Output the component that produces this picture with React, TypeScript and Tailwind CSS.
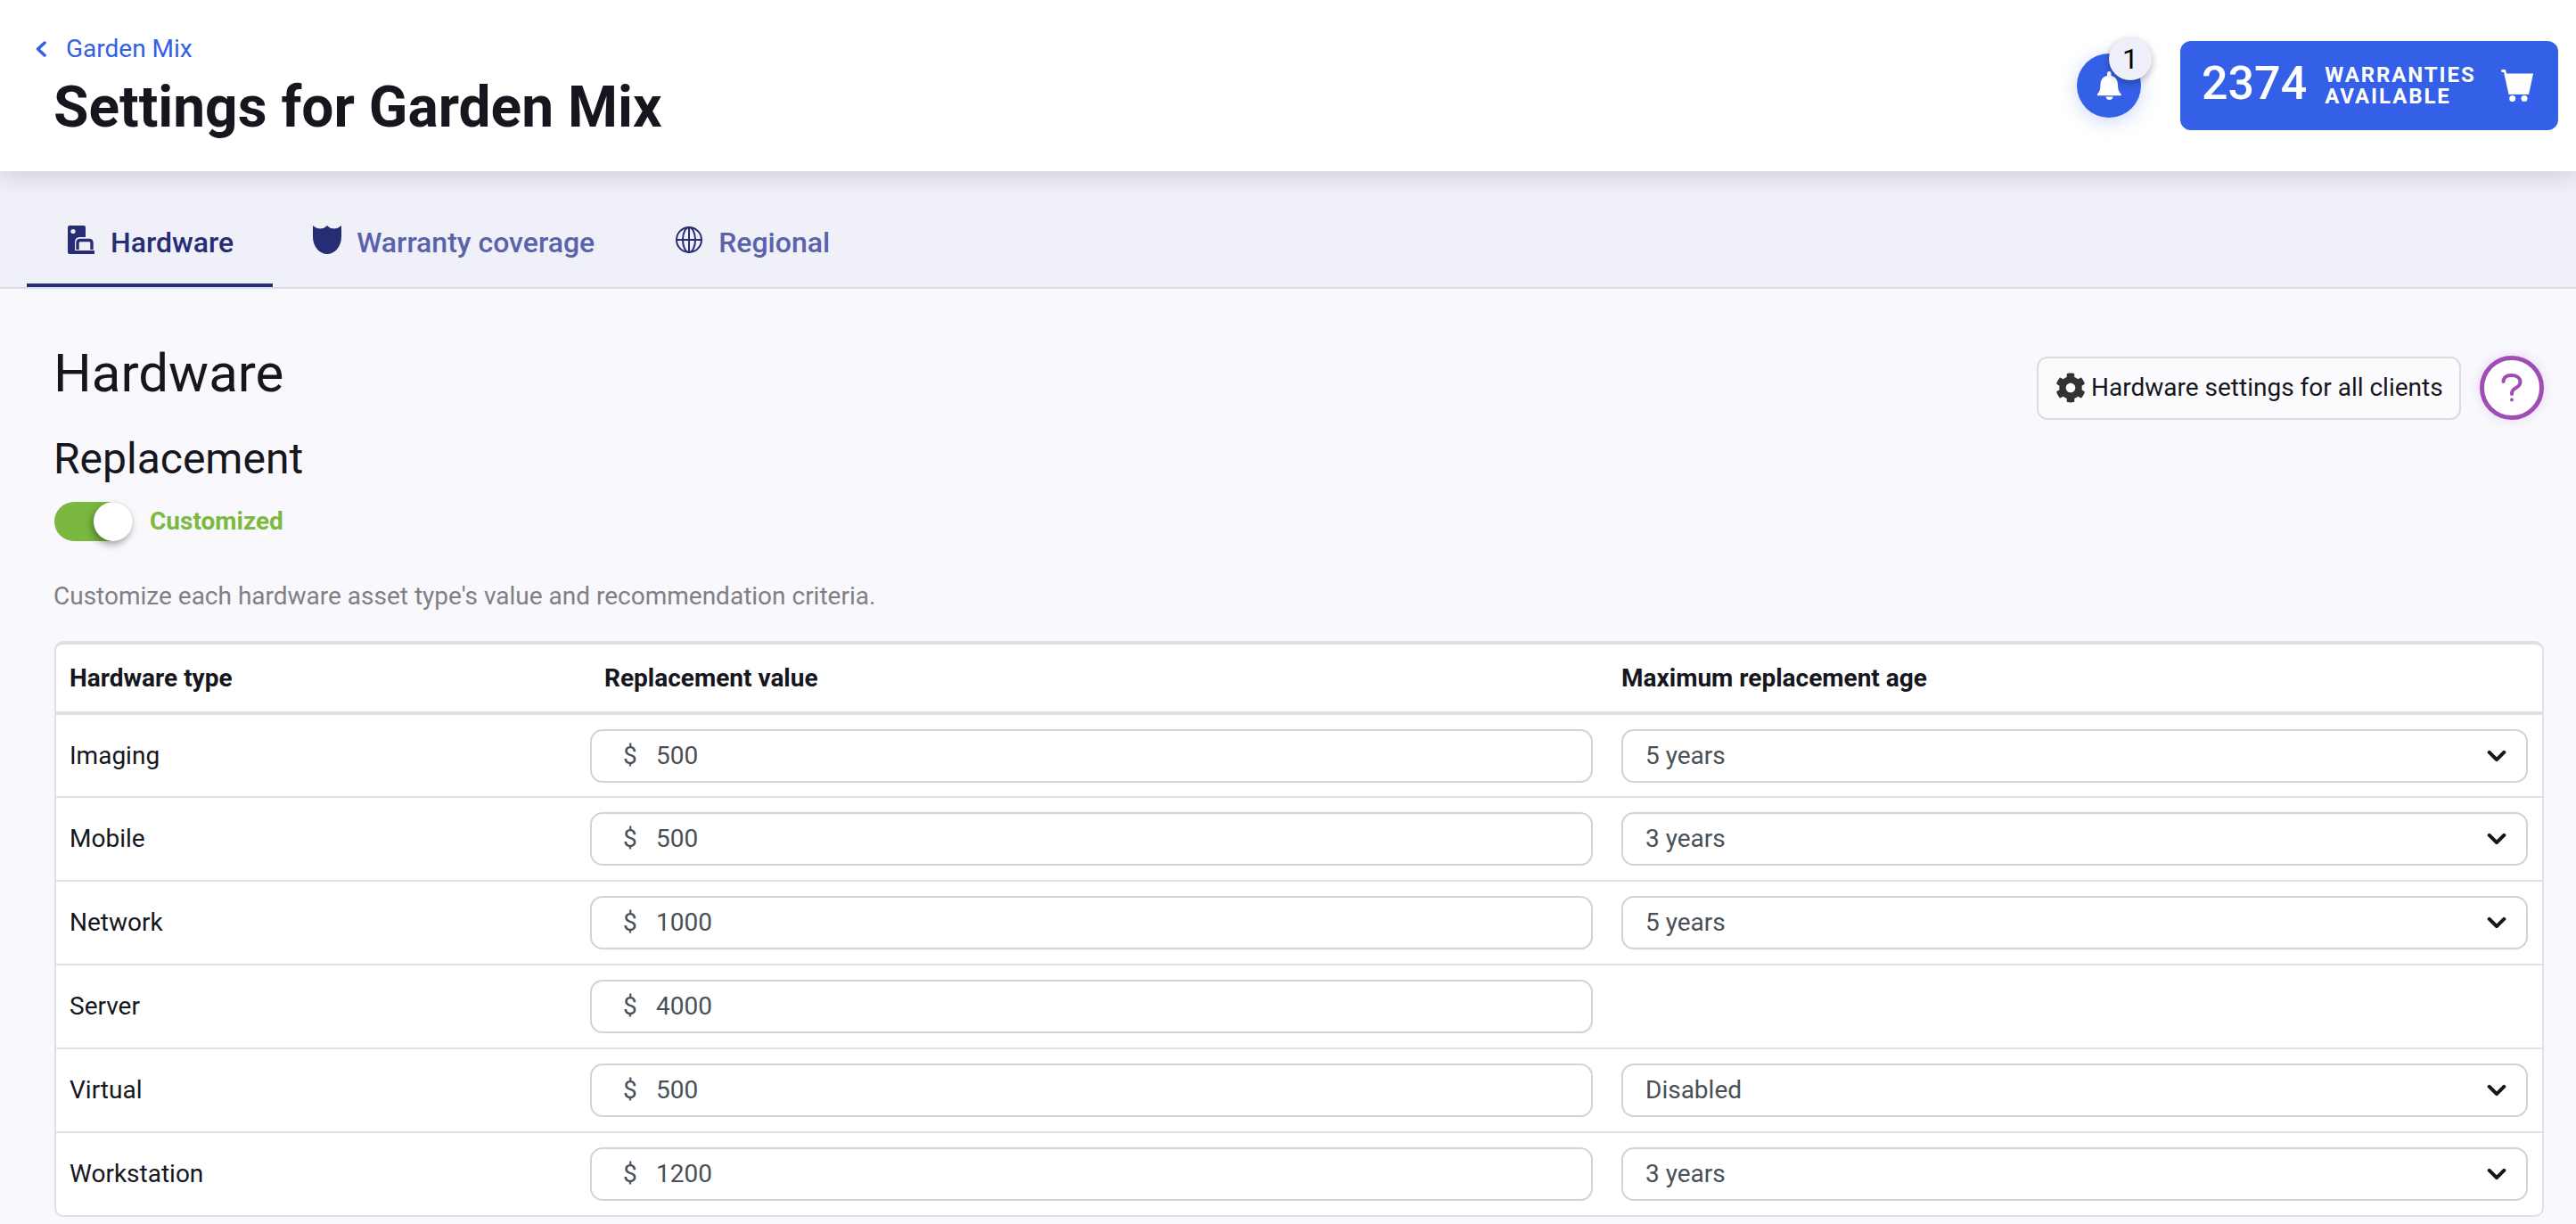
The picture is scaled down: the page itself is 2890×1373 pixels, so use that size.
import { FaCog } from 'react-icons/fa';

const ROWS = [
  { name: 'Imaging', value: '500', age: '5 years' },
  { name: 'Mobile', value: '500', age: '3 years' },
  { name: 'Network', value: '1000', age: '5 years' },
  { name: 'Server', value: '4000', age: '' },
  { name: 'Virtual', value: '500', age: 'Disabled' },
  { name: 'Workstation', value: '1200', age: '3 years' },
];

function HardwareIcon() {
  return (
    <svg width="30" height="32" viewBox="0 0 30 32">
      <rect x="0" y="0" width="20" height="32" rx="2" fill="#272d75" />
      <circle cx="6" cy="6.5" r="2.6" fill="#f0f0f9" />
      <path d="M8 32V19c0-4 2-6 6-6h16v19z" fill="#f0f0f9" />
      <path d="M11 27V19.5c0-2 1-3 3-3h10c2 0 3 1 3 3V27" fill="none" stroke="#272d75" strokeWidth="3.4" />
      <rect x="8" y="28" width="22" height="4" fill="#272d75" />
    </svg>
  );
}

function ShieldIcon() {
  return (
    <svg width="32" height="32" viewBox="0 0 32 32">
      <path d="M0 0Q4 3.5 8 3.5 13 3.5 16 0 19 3.5 24 3.5 28 3.5 32 0V13C32 24 24 32 16 32 8 32 0 24 0 13Z" fill="#272d75" />
    </svg>
  );
}

function GlobeIcon() {
  return (
    <svg width="30" height="30" viewBox="0 0 30 30" fill="none" stroke="#272d75" strokeWidth="2">
      <circle cx="15" cy="15" r="14" />
      <ellipse cx="15" cy="15" rx="7" ry="14" />
      <path d="M15 1v28M1 15h28" />
    </svg>
  );
}

function BellIcon() {
  return (
    <svg width="27" height="32" viewBox="0 0 27 32" fill="#fff">
      <path d="M13.5 0c1.2 0 2 .9 2 2v3c5 1 7.5 5 7.5 10 0 5 1 8 3.5 10.5.6.6.3 1.8-.7 1.8H.7c-1 0-1.3-1.2-.7-1.8C2.5 23 3.500 20 3.500 15c0-5 2.500-9 7.500-10V2c0-1.100.8-2 2.500-2z" />
      <path d="M9.500 28.500h8c0 2-1.800 3.500-4 3.500s-4-1.500-4-3.500z" />
    </svg>
  );
}

function CartIcon() {
  return (
    <svg width="36" height="36" viewBox="0 0 36 36" fill="#fff">
      <path d="M1.500 0H3.500C4.500 0 5 .5 5.300 1.500L6 4.500H36L31 28H8.500L3 3H1.500C.5 3 0 2 0 1.500S.5 0 1.500 0z" />
      <circle cx="12.700" cy="32.500" r="3.500" />
      <circle cx="26" cy="32.500" r="3.500" />
    </svg>
  );
}

function QuestionIcon() {
  return (
    <svg width="24" height="32" viewBox="0 0 24 32" fill="none" stroke="#a04cb5" strokeWidth="4" strokeLinecap="round">
      <path d="M2.500 9C2.500 4.500 6 2 11.500 2 17.500 2 21.500 5 21.500 9.500 21.500 14 17.500 15.500 14.500 17.500 12.500 19 12 20.500 12 23" />
      <circle cx="12" cy="29.500" r="2" fill="#a04cb5" stroke="none" />
    </svg>
  );
}

export default function App() {
  return (
    <div className="h-[1373px] overflow-hidden bg-[#f8f8fd] text-[28px] text-[#15161e] [font-family:Roboto,sans-serif]">
      {/* Header */}
      <header className="relative z-10 flex h-[192px] items-center justify-between bg-white pr-[20px] shadow-[0_6px_24px_rgba(40,40,80,0.16)]">
        <div className="self-start pt-[37px]">
          <a className="flex items-center pl-[39px] leading-[36px] text-[#3361e5]">
            <svg width="14" height="18" viewBox="0 0 14 18" fill="none" stroke="#3361e5" strokeWidth="3.500" strokeLinecap="round" strokeLinejoin="round" className="mr-[21px]">
              <path d="M11 2L3.500 9 11 16" />
            </svg>
            Garden Mix
          </a>
          <h1 className="mt-[12px] pl-[60px] text-[64px] font-bold leading-[72px]">Settings for Garden Mix</h1>
        </div>
        <div className="flex items-center gap-[44px]">
          <div className="relative flex h-[72px] w-[72px] items-center justify-center rounded-full bg-[#3360e6] shadow-[0_4px_20px_rgba(51,96,230,0.25)]">
            <BellIcon />
            <span className="absolute left-[36px] top-[-18px] flex h-[48px] w-[48px] items-center justify-center rounded-full bg-[#eeeff8] text-[32px] text-black shadow-[0_3px_8px_rgba(0,0,0,0.3)]">
              1
            </span>
          </div>
          <button className="flex h-[100px] w-[424px] items-center rounded-[12px] bg-[#3360e6] pl-[24px] text-white">
            <span className="mb-[4px] text-[52px] font-medium leading-none">2374</span>
            <span className="ml-[20px] text-left text-[24px] font-bold leading-[24px] tracking-[0.08em]">
              WARRANTIES
              <br />
              AVAILABLE
            </span>
            <span className="ml-[28px]">
              <CartIcon />
            </span>
          </button>
        </div>
      </header>

      {/* Tabs */}
      <nav className="flex h-[132px] border-b-2 border-[#dcdce6] bg-[#f0f0f9] pl-[30px]">
        <a className="flex h-[130px] items-center gap-[18px] border-b-4 border-[#272d75] pl-[46px] pr-[44px] pt-[28px] text-[32px] font-medium text-[#272d75]">
          <HardwareIcon />
          <span className="mt-[6px]">Hardware</span>
        </a>
        <a className="flex h-[130px] items-center gap-[17px] pl-[45px] pr-[46px] pt-[24px] text-[32px] font-medium text-[#5a62ab]">
          <ShieldIcon />
          <span className="mt-[6px]">Warranty coverage</span>
        </a>
        <a className="flex h-[130px] items-center gap-[18px] px-[45px] pt-[24px] text-[32px] font-medium text-[#5a62ab]">
          <GlobeIcon />
          <span className="mt-[6px]">Regional</span>
        </a>
      </nav>

      <main className="pl-[61px] pr-[36px]">
        <div className="flex items-start justify-between pt-[60px]">
          <h2 className="-ml-px text-[60px] leading-[70px]">Hardware</h2>
          <div className="mt-[15px] flex items-center gap-[21px]">
            <button className="flex h-[71px] w-[476px] items-center gap-[6px] rounded-[12px] border-2 border-[#dcdcde] bg-[#fbfbfe] pl-[19px] text-[28px]">
              <FaCog className="h-[34px] w-[34px] text-[#333333]" />
              Hardware settings for all clients
            </button>
            <button className="flex h-[72px] w-[72px] items-center justify-center rounded-full border-[5px] border-[#a04cb5] bg-white shadow-[0_0_12px_rgba(160,76,181,0.2)]">
              <QuestionIcon />
            </button>
          </div>
        </div>

        <h3 className="-ml-px mt-[16px] text-[48px] leading-[56px]">Replacement</h3>

        <div className="mt-[20px] flex items-center gap-[19px]">
          <div className="relative h-[44px] w-[88px] rounded-full bg-[#7ab83f]">
            <span className="absolute right-0 top-0 h-[44px] w-[44px] rounded-full bg-white shadow-[-2px_4px_8px_rgba(0,0,0,0.35)]" />
          </div>
          <span className="font-bold text-[#7bb93f]">Customized</span>
        </div>

        <p className="-ml-px mt-[42px] leading-[40px] text-[#808084]">Customize each hardware asset type's value and recommendation criteria.</p>

        {/* Replacement table */}
        <div className="mt-[30px] overflow-hidden rounded-[10px] border-2 border-t-4 border-[#dee2e6] bg-white">
          <table className="w-full table-fixed border-collapse">
            <colgroup>
              <col className="w-[583px]" />
              <col className="w-[1157px]" />
              <col />
            </colgroup>
            <thead>
              <tr className="h-[77px] border-b-4 border-[#dee2e6] text-left font-bold">
                <th className="pl-[15px]">Hardware type</th>
                <th className="pl-[32px]">Replacement value</th>
                <th className="pl-[16px]">Maximum replacement age</th>
              </tr>
            </thead>
            <tbody>
              {ROWS.map((row) => (
                <tr key={row.name} className="h-[94px] border-b-2 border-[#dee2e6] last:h-[93px] last:border-b-0">
                  <td className="pl-[15px]">{row.name}</td>
                  <td className="px-[16px]">
                    <div className="flex h-[60px] items-center rounded-[14px] border-2 border-[#ced4da] pl-[35px] text-[#495057]">
                      <span className="w-[37px]">$</span>
                      {row.value}
                    </div>
                  </td>
                  <td className="px-[16px]">
                    {row.age && (
                      <div className="flex h-[60px] items-center justify-between rounded-[14px] border-2 border-[#ced4da] pl-[25px] pr-[22px] text-[#495057]">
                        {row.age}
                        <svg width="22" height="22" viewBox="0 0 16 16" fill="none" stroke="#15161e" strokeWidth="3" strokeLinecap="round" strokeLinejoin="round">
                          <path d="M2 5l6 6 6-6" />
                        </svg>
                      </div>
                    )}
                  </td>
                </tr>
              ))}
            </tbody>
          </table>
        </div>
      </main>
    </div>
  );
}
